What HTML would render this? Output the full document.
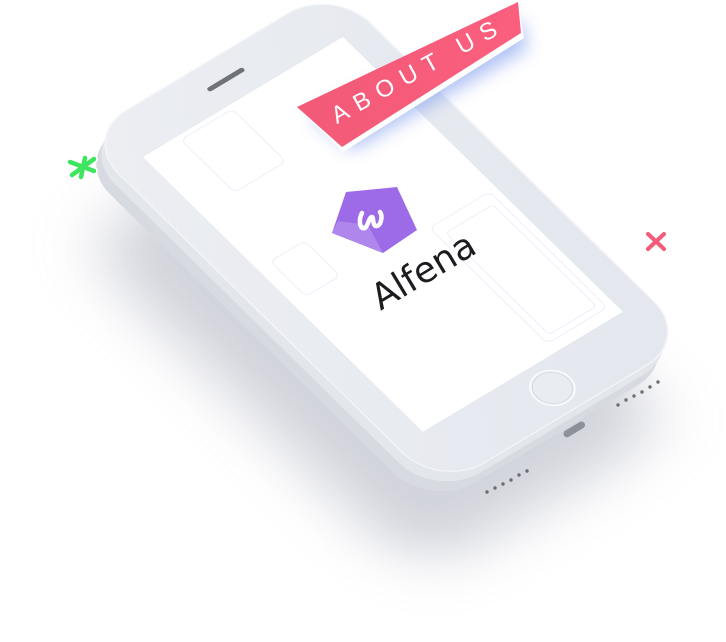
<!DOCTYPE html>
<html><head><meta charset="utf-8"><style>
html,body{margin:0;padding:0;background:#fff;width:726px;height:642px;overflow:hidden}
svg{display:block}
</style></head><body>
<svg width="726" height="642" viewBox="0 0 726 642" xmlns="http://www.w3.org/2000/svg">
<defs>
<filter id="blur30" x="-50%" y="-50%" width="200%" height="200%"><feGaussianBlur stdDeviation="30"/></filter>
<filter id="blur10" x="-50%" y="-50%" width="200%" height="200%"><feGaussianBlur stdDeviation="9"/></filter>
<linearGradient id="face" x1="0" y1="0" x2="1" y2="1">
<stop offset="0" stop-color="#eceef2"/><stop offset="1" stop-color="#e3e7ee"/></linearGradient>
<linearGradient id="ban" x1="0" y1="0" x2="1" y2="0">
<stop offset="0" stop-color="#f25a78"/><stop offset="1" stop-color="#fb5f7d"/></linearGradient>
</defs>
<g transform="matrix(0.858,-0.515,0.714,0.701,143,157)">
<rect x="-110" y="40" width="300" height="480" rx="60" fill="#b3b6c3" opacity="0.6" filter="url(#blur30)"/>
</g>
<g transform="translate(-9,20) matrix(0.858,-0.515,0.714,0.701,143,157)">
<rect x="-30" y="-50" width="293" height="502" rx="52" fill="#d7dae1"/>
</g>
<g transform="translate(-4,10) matrix(0.858,-0.515,0.714,0.701,143,157)">
<rect x="-30" y="-50" width="293" height="502" rx="52" fill="#e3e6eb"/>
</g>
<g fill="#e6e8ed" stroke="#bfc3ca" stroke-width="0.8">
<path d="M132 181 l12 12 l-2 4 l-12 -12z"/>
<path d="M165 211 l26 26 l-2 4 l-26 -26z"/>
<path d="M199 245 l26 26 l-2 4 l-26 -26z"/>
</g>
<g transform="matrix(0.858,-0.515,0.714,0.701,143,157)">
<rect x="-30" y="-50" width="293" height="502" rx="52" fill="url(#face)" stroke="#f3f4f7" stroke-width="1.5"/>
<rect x="0" y="0" width="233" height="392" fill="#ffffff"/>
<g fill="none" stroke="#eceff8" stroke-width="1">
<rect x="40" y="5" width="60" height="75" rx="6"/>
<rect x="155" y="215" width="70" height="165" rx="6"/>
<rect x="163" y="228" width="55" height="145" rx="4"/>
<rect x="15" y="160" width="40" height="50" rx="6"/>
</g>
<rect x="96" y="-27" width="42" height="5" rx="2.5" fill="#6f7278"/>
<circle cx="126" cy="422" r="20" fill="#e9ecf1" stroke="#f8f9fb" stroke-width="2"/>
<circle cx="126" cy="422" r="18" fill="none" stroke="#d3d7de" stroke-width="0.8"/>
</g>
<rect x="562" y="426" width="24" height="7" rx="3.5" fill="#8d9097" transform="rotate(-31 574 429)"/>
<g fill="#6b6e74">
<circle cx="487" cy="492" r="1.7"/><circle cx="495" cy="488" r="1.7"/><circle cx="503" cy="484" r="1.7"/><circle cx="511" cy="480" r="1.7"/><circle cx="519" cy="475" r="1.7"/><circle cx="527" cy="471" r="1.7"/>
<circle cx="618" cy="405" r="1.7"/><circle cx="626" cy="400" r="1.7"/><circle cx="634" cy="396" r="1.7"/><circle cx="642" cy="392" r="1.7"/><circle cx="650" cy="387" r="1.7"/><circle cx="658" cy="382" r="1.7"/>
</g>
<path d="M346 192 L397 187 L417 230 L383 253 L332 233 Z" fill="#9d6ae8"/>
<path d="M332 233 L338 221 L368 225 L383 253 Z" fill="#ae86ec"/>
<path d="M362 213 c-4 8 -2 17 3 15 c3 -2 4 -11 7 -11 c2 0 0 10 5 9 c4 -1 6 -10 3 -14" fill="none" stroke="#fff" stroke-width="4.5" stroke-linecap="round" stroke-linejoin="round"/>
<text x="424" y="283" text-anchor="middle" transform="rotate(-31 424 272)" font-family="DejaVu Sans, sans-serif" font-size="36" fill="#1c1c20">Alfena</text>
<path d="M310 115 L520 20 L528 48 L352 150 Z" fill="#8aa4f0" opacity="0.7" filter="url(#blur10)"/>
<path d="M297 107 L518 3 L524 38 L343 152 Z" fill="#ffffff"/>
<path d="M297 107 L518 2 L521 33 L342 147 Z" fill="url(#ban)"/>
<text x="418" y="78" text-anchor="middle" transform="rotate(-29 418 70)" font-family="Liberation Sans, sans-serif" font-size="24" fill="#fff" letter-spacing="9">ABOUT US</text>
<g stroke="#fff" stroke-width="8" stroke-linecap="round">
<path d="M85 158 L81 177"/><path d="M70 162 L94 171"/><path d="M72 175 L94 159"/>
</g>
<g stroke="#3ee660" stroke-width="4.5" stroke-linecap="round">
<path d="M85 158 L81 177"/><path d="M70 162 L94 171"/><path d="M72 175 L94 159"/>
</g>
<g stroke="#f55a78" stroke-width="4" stroke-linecap="round">
<path d="M648 234 L664 249"/><path d="M664 234 L648 249"/>
</g>
</svg>
</body></html>
